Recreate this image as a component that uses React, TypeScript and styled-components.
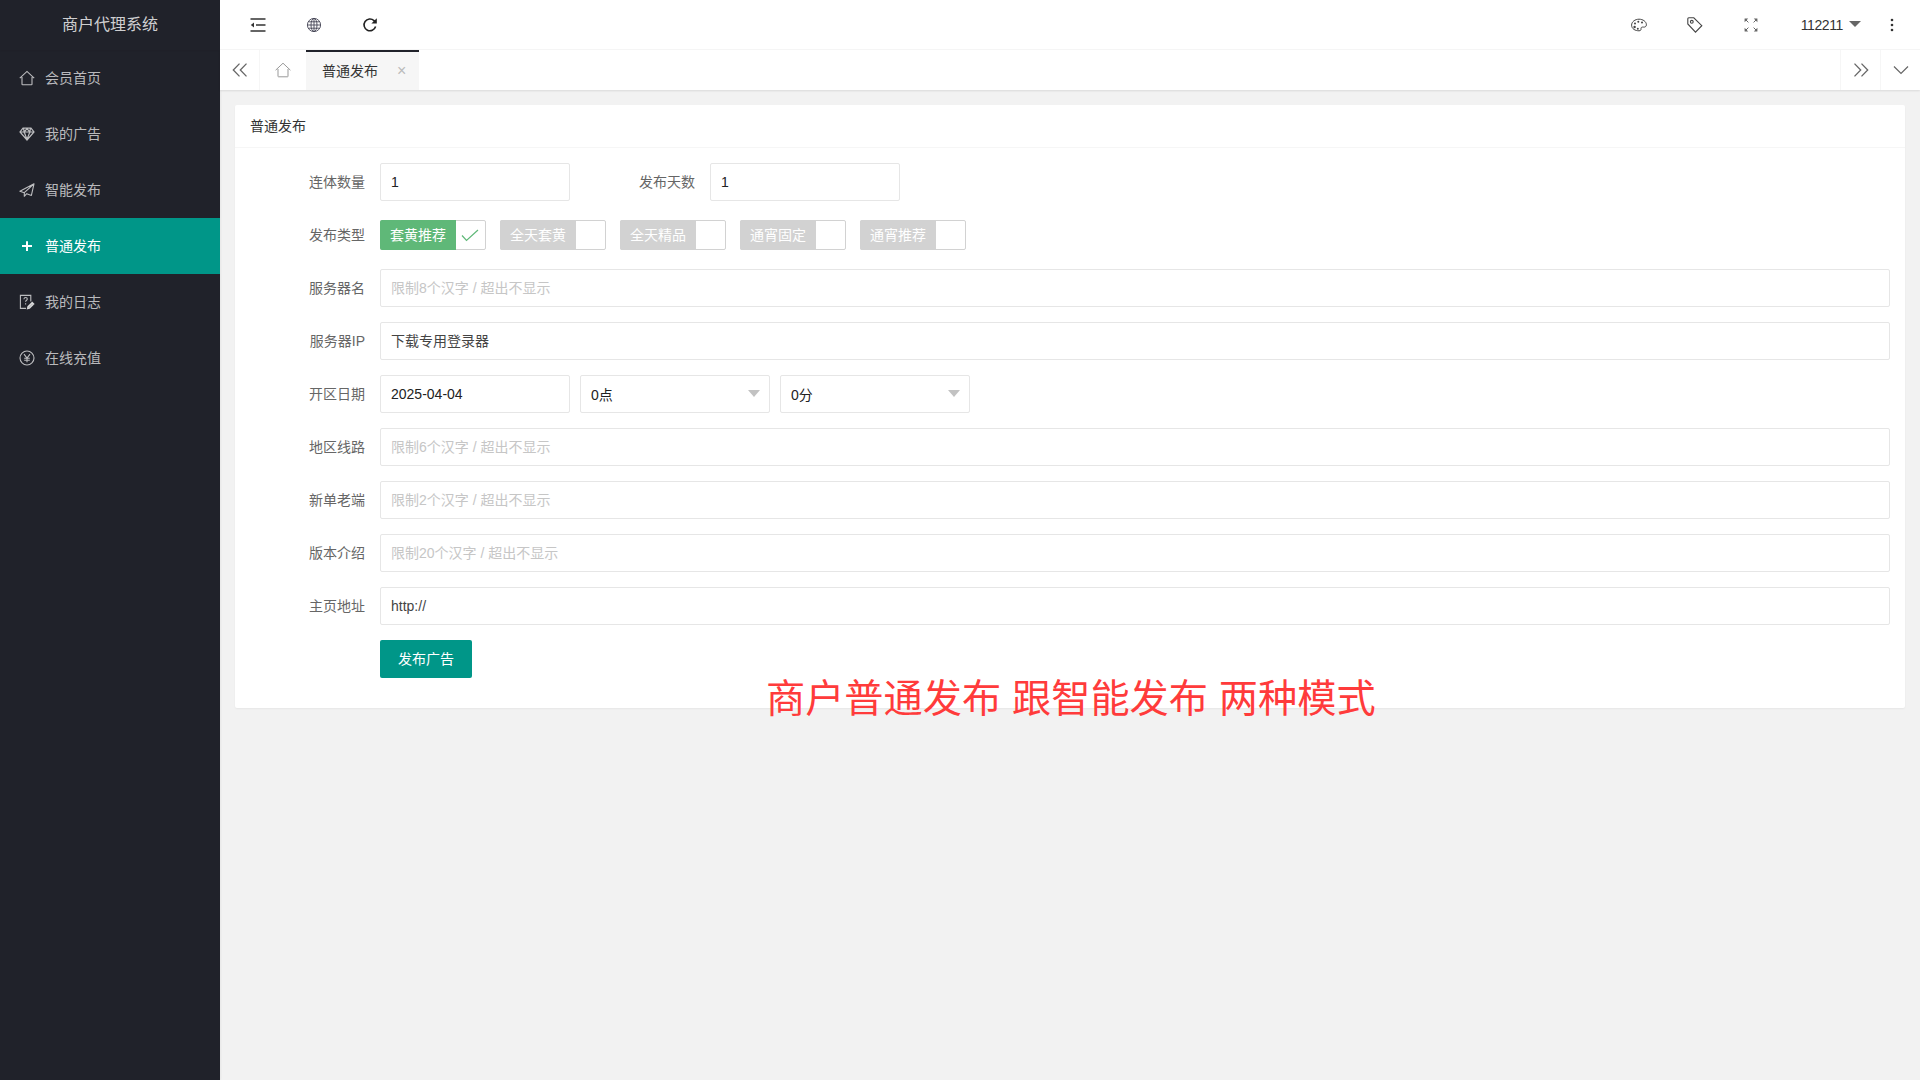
// App.tsx
import React from 'react';
import styled, { createGlobalStyle } from 'styled-components';

const FONT = '"Liberation Sans", "Noto Sans CJK SC", sans-serif';

const menuItems = [
  { label: '会员首页', icon: 'home' },
  { label: '我的广告', icon: 'diamond' },
  { label: '智能发布', icon: 'plane' },
  { label: '普通发布', icon: 'plus', active: true },
  { label: '我的日志', icon: 'log' },
  { label: '在线充值', icon: 'yen' },
];

const adTypes = [
  { label: '套黄推荐', checked: true },
  { label: '全天套黄' },
  { label: '全天精品' },
  { label: '通宵固定' },
  { label: '通宵推荐' },
];

function NavIcon({ name }: { name: string }) {
  if (name === 'home') {
    return (
      <svg width="16" height="16" viewBox="0 0 16 16" fill="none" stroke="currentColor" strokeWidth="1.1">
        <path d="M.8 8.2 8 1.4l7.2 6.8M3 7v7.2q0 .6.6.6h8.8q.6 0 .6-.6V7" />
      </svg>
    );
  }
  if (name === 'diamond') {
    return (
      <svg width="16" height="16" viewBox="0 0 16 16" fill="none" stroke="currentColor" strokeWidth="1.2">
        <path d="M4 2.2h8l3 3.8-7 8-7-8zM1.2 6h13.6M5.2 6 8 13.5 10.8 6M4.6 2.6 5.2 6 8 2.6 10.8 6l.6-3.4" />
      </svg>
    );
  }
  if (name === 'plane') {
    return (
      <svg width="16" height="16" viewBox="0 0 16 16" fill="none" stroke="currentColor" strokeWidth="1.1" strokeLinejoin="round">
        <path d="M15 1.8.9 9.2l4.4 1.5zM15 1.8l-9.7 8.9v3.6l2.4-2.6 4.7 1.7z" />
      </svg>
    );
  }
  if (name === 'plus') {
    return (
      <svg width="16" height="16" viewBox="0 0 16 16" fill="none" stroke="currentColor" strokeWidth="2">
        <path d="M8 3.2v9.8M3 8h10" />
      </svg>
    );
  }
  if (name === 'log') {
    return (
      <svg width="16" height="16" viewBox="0 0 16 16" fill="none" stroke="currentColor" strokeWidth="1.1">
        <path d="M7 14.4H1.4V1.4h10.4v6" />
        <path d="M4.9 5.2q.2-1.7 1.7-1.7 1.7 0 1.7 1.5 0 .9-1 1.5-.7.4-.7 1.3M6.6 9.2v1.2" />
        <path d="m8.4 14.8.5-2.2 4.3-4.3 1.7 1.7-4.3 4.3z" fill="currentColor" />
      </svg>
    );
  }
  return (
    <svg width="16" height="16" viewBox="0 0 16 16" fill="none" stroke="currentColor" strokeWidth="1.1">
      <circle cx="8" cy="8" r="7" />
      <path d="M5 4.2 8 8l3-3.8M8 8v4.2M5.2 8.2h5.6M5.2 10.2h5.6" />
    </svg>
  );
}

export default function App() {
  return (
    <Page>
      <GlobalStyle />
      <Sidebar>
        <Logo>商户代理系统</Logo>
        {menuItems.map((item) => (
          <MenuItem key={item.label} $active={item.active}>
            <NavIcon name={item.icon} />
            <MenuLabel>{item.label}</MenuLabel>
          </MenuItem>
        ))}
      </Sidebar>

      <Main>
        <Header>
          <HeaderGroup>
            <HeaderItem>
              <svg width="16" height="16" viewBox="0 0 16 16" fill="none" stroke="#333" strokeWidth="1.3">
                <path d="M.5 2h15M6 8h9.5M.5 14h15" />
                <path d="M4 5.6v4.8L.8 8z" fill="#333" stroke="none" />
              </svg>
            </HeaderItem>
            <HeaderItem>
              <svg width="16" height="16" viewBox="0 0 16 16" fill="none" stroke="#445" strokeWidth=".9">
                <circle cx="8" cy="8" r="6.6" />
                <ellipse cx="8" cy="8" rx="3" ry="6.6" />
                <path d="M8 1.4v13.2M1.4 8h13.2M2.4 4.8h11.2M2.4 11.2h11.2" />
              </svg>
            </HeaderItem>
            <HeaderItem>
              <svg width="16" height="16" viewBox="0 0 16 16" fill="none" stroke="#222" strokeWidth="1.6">
                <path d="M13.6 9.6A5.9 5.9 0 1 1 12 3.6l1.6 1.6" />
                <path d="M14.8 1.2v5.4H9.4z" fill="#222" stroke="none" />
              </svg>
            </HeaderItem>
          </HeaderGroup>
          <HeaderGroup>
            <HeaderItem>
              <svg width="16" height="16" viewBox="0 0 16 16" fill="none" stroke="#444" strokeWidth="1">
                <path d="M8 2.2c4 0 7.4 2.4 7.4 5.6 0 1.7-1.4 2.5-3 2.3-1.5-.2-2.6.3-2.4 1.6.2 1.2-.4 2.1-2 2.1-3.6 0-7.4-1.8-7.4-5.7C.6 4.8 4 2.2 8 2.2z" />
                <g fill="#444" stroke="none">
                  <circle cx="4" cy="6.6" r="1" />
                  <circle cx="7.3" cy="4.8" r="1" />
                  <circle cx="11" cy="5.6" r="1" />
                  <circle cx="3.6" cy="10" r="1.2" />
                  <circle cx="6.8" cy="11.8" r="1" />
                </g>
              </svg>
            </HeaderItem>
            <HeaderItem>
              <svg width="16" height="16" viewBox="0 0 16 16" fill="none" stroke="#444" strokeWidth="1.1">
                <path d="M.8 1.8q0-1 1-1h5l8 7.9-6.3 6.500L.8 7z" />
                <circle cx="4.8" cy="4.8" r="1.4" />
              </svg>
            </HeaderItem>
            <HeaderItem>
              <svg width="14" height="14" viewBox="0 0 14 14" fill="none" stroke="#666" strokeWidth="1">
                <path d="m1 1 3.4 3.4M13 1 9.6 4.4M1 13l3.4-3.4M13 13 9.6 9.6" />
                <path d="M.6 4.2V.6h3.6zM13.4 4.2V.6H9.8zM.6 9.8v3.600h3.600zM13.400 9.800v3.600H9.800z" fill="#666" stroke="none" />
              </svg>
            </HeaderItem>
            <UserName>
              <UserText>112211</UserText>
              <Caret />
            </UserName>
            <HeaderItem>
              <svg width="4" height="14" viewBox="0 0 4 14" fill="#333">
                <circle cx="2" cy="2" r="1.3" />
                <circle cx="2" cy="7" r="1.3" />
                <circle cx="2" cy="12" r="1.3" />
              </svg>
            </HeaderItem>
          </HeaderGroup>
        </Header>

        <TabBar>
          <TabButton>
            <svg width="16" height="14" viewBox="0 0 16 14" fill="none" stroke="#666" strokeWidth="1.3">
              <path d="M7.5.6 1.3 7l6.2 6.4M14.5.6 8.3 7l6.2 6.4" />
            </svg>
          </TabButton>
          <HomeTab>
            <svg width="16" height="16" viewBox="0 0 16 16" fill="none" stroke="#999" strokeWidth="1">
              <path d="M.6 8.2 8 1.2l7.4 7M3 7v7.3q0 .5.5.5h9q.5 0 .5-.5V7" />
            </svg>
          </HomeTab>
          <ActiveTab>
            <TabTitle>普通发布</TabTitle>
            <TabClose>×</TabClose>
          </ActiveTab>
          <TabSpacer />
          <TabEndButton>
            <svg width="16" height="14" viewBox="0 0 16 14" fill="none" stroke="#666" strokeWidth="1.3">
              <path d="M8.5.6 14.7 7l-6.2 6.4M1.5.6 7.7 7l-6.2 6.4" />
            </svg>
          </TabEndButton>
          <TabEndButton>
            <svg width="16" height="10" viewBox="0 0 16 10" fill="none" stroke="#666" strokeWidth="1.2">
              <path d="m1 1.5 7 7 7-7" />
            </svg>
          </TabEndButton>
        </TabBar>

        <Content>
          <Card>
            <CardHeader>普通发布</CardHeader>
            <CardBody>
              <Row>
                <Label>连体数量</Label>
                <ShortInput readOnly defaultValue="1" />
                <Label>发布天数</Label>
                <ShortInput readOnly defaultValue="1" />
              </Row>
              <Row>
                <Label>发布类型</Label>
                <ToggleGroup>
                  {adTypes.map((type) => (
                    <Toggle key={type.label}>
                      <ToggleText $checked={type.checked}>{type.label}</ToggleText>
                      {type.checked && (
                        <svg width="20" height="16" viewBox="0 0 20 16" fill="none" stroke="#5fb878" strokeWidth="1.2">
                          <path d="m2 8.5 4.500 5L18 3" />
                        </svg>
                      )}
                    </Toggle>
                  ))}
                </ToggleGroup>
              </Row>
              <Row>
                <Label>服务器名</Label>
                <WideInput readOnly placeholder="限制8个汉字 / 超出不显示" />
              </Row>
              <Row>
                <Label>服务器IP</Label>
                <WideInput $raised readOnly defaultValue="下载专用登录器" />
              </Row>
              <Row>
                <Label>开区日期</Label>
                <ShortInput readOnly defaultValue="2025-04-04" />
                <SelectBox>
                  <ShortInput readOnly defaultValue="0点" />
                  <SelectArrow />
                </SelectBox>
                <SelectBox>
                  <ShortInput readOnly defaultValue="0分" />
                  <SelectArrow />
                </SelectBox>
              </Row>
              <Row>
                <Label>地区线路</Label>
                <WideInput readOnly placeholder="限制6个汉字 / 超出不显示" />
              </Row>
              <Row>
                <Label>新单老端</Label>
                <WideInput readOnly placeholder="限制2个汉字 / 超出不显示" />
              </Row>
              <Row>
                <Label>版本介绍</Label>
                <WideInput readOnly placeholder="限制20个汉字 / 超出不显示" />
              </Row>
              <Row>
                <Label>主页地址</Label>
                <WideInput readOnly defaultValue="http://" />
              </Row>
              <Row>
                <Label />
                <SubmitButton>发布广告</SubmitButton>
              </Row>
            </CardBody>
          </Card>
        </Content>
      </Main>
      <Annotation>商户普通发布 跟智能发布 两种模式</Annotation>
    </Page>
  );
}

// Styled Components
const GlobalStyle = createGlobalStyle`
  html, body {
    margin: 0;
    padding: 0;
    background: #f2f2f2;
  }

  * {
    box-sizing: border-box;
  }
`;

const Page = styled.div`
  position: relative;
  display: flex;
  width: 1920px;
  height: 1080px;
  overflow: hidden;
  font-family: ${FONT};
  font-size: 14px;
  color: #333;
`;

const Sidebar = styled.aside`
  flex: 0 0 220px;
  background: #20222a;
  box-shadow: 1px 0 2px rgba(0, 0, 0, 0.05);
`;

const Logo = styled.div`
  height: 50px;
  line-height: 50px;
  text-align: center;
  font-size: 16px;
  color: rgba(255, 255, 255, 0.8);
  box-shadow: 0 1px 2px rgba(0, 0, 0, 0.05);
`;

const MenuItem = styled.div<{ $active?: boolean }>`
  display: flex;
  align-items: center;
  gap: 10px;
  height: 56px;
  padding-left: 19px;
  color: ${(p) => (p.$active ? '#fff' : 'rgba(255, 255, 255, 0.7)')};
  background: ${(p) => (p.$active ? '#009688' : 'transparent')};
`;

const MenuLabel = styled.span`
  padding-bottom: 2px;
`;

const Main = styled.main`
  flex: 1;
  display: flex;
  flex-direction: column;
  min-width: 0;
`;

const Header = styled.header`
  display: flex;
  justify-content: space-between;
  height: 50px;
  padding: 1px 0 0 10px;
  background: #fff;
  border-bottom: 1px solid #f6f6f6;
`;

const HeaderGroup = styled.div`
  display: flex;
  align-items: center;
`;

const HeaderItem = styled.div`
  display: flex;
  align-items: center;
  justify-content: center;
  width: 56px;
  height: 100%;
`;

const UserName = styled.div`
  display: flex;
  align-items: center;
  gap: 6px;
  height: 100%;
  padding: 0 3px 0 22px;
  color: #333;
`;

const UserText = styled.span`
  letter-spacing: -0.4px;
`;

const Caret = styled.span`
  width: 0;
  height: 0;
  margin-top: -3px;
  border-style: solid;
  border-width: 6px 6px 0;
  border-color: #666 transparent transparent;
`;

const TabBar = styled.div`
  display: flex;
  height: 40px;
  background: #fff;
  box-shadow: 0 1px 2px rgba(0, 0, 0, 0.1);
`;

const TabButton = styled.div`
  display: flex;
  align-items: center;
  justify-content: center;
  width: 40px;
  border-right: 1px solid #f6f6f6;
`;

const HomeTab = styled.div`
  display: flex;
  align-items: center;
  justify-content: center;
  width: 46px;
`;

const ActiveTab = styled.div`
  display: flex;
  align-items: center;
  width: 113px;
  padding: 0 0 0 16px;
  background: #f6f6f6;
  border-top: 2px solid #20222a;
  color: #333;
`;

const TabTitle = styled.span`
  padding-bottom: 2px;
`;

const TabClose = styled.span`
  margin-left: 19px;
  font-size: 16px;
  line-height: 1;
  color: #bbb;
`;

const TabSpacer = styled.div`
  flex: 1;
`;

const TabEndButton = styled.div`
  display: flex;
  align-items: center;
  justify-content: center;
  width: 40px;
  border-left: 1px solid #f6f6f6;
`;

const Content = styled.div`
  padding: 15px;
`;

const Card = styled.section`
  background: #fff;
  border-radius: 2px;
  box-shadow: 0 1px 2px rgba(0, 0, 0, 0.05);
`;

const CardHeader = styled.div`
  height: 43px;
  line-height: 42px;
  padding: 0 15px;
  border-bottom: 1px solid #f6f6f6;
  color: #333;
`;

const CardBody = styled.form`
  display: flex;
  flex-direction: column;
  gap: 15px;
  padding: 15px 15px 30px;
`;

const Row = styled.div`
  display: flex;
  align-items: center;
  gap: 10px;
  height: 38px;
`;

const Label = styled.label`
  flex: 0 0 115px;
  margin-right: 5px;
  padding-bottom: 2px;
  text-align: right;
  color: #666;
`;

const TextInput = styled.input`
  height: 38px;
  padding: 0 10px;
  font-family: ${FONT};
  font-size: 14px;
  color: #222;
  background: #fff;
  border: 1px solid #e6e6e6;
  border-radius: 2px;
  outline: none;

  &::placeholder {
    color: #c6c6c6;
  }
`;

const ShortInput = styled(TextInput)`
  width: 190px;
`;

const WideInput = styled(TextInput)<{ $raised?: boolean }>`
  flex: 1;
  min-width: 0;
  padding-bottom: ${(p) => (p.$raised ? '2px' : '0')};
  color: #444;
`;

const SelectBox = styled.div`
  position: relative;
  width: 190px;
`;

const SelectArrow = styled.span`
  position: absolute;
  top: 15px;
  right: 10px;
  width: 0;
  height: 0;
  border-style: solid;
  border-width: 7px 6px 0;
  border-color: #c2c2c2 transparent transparent;
`;

const ToggleGroup = styled.div`
  display: flex;
  gap: 14px;
`;

const Toggle = styled.div`
  display: flex;
  align-items: center;
  width: 106px;
  height: 30px;
  background: #fff;
  border: 1px solid #d2d2d2;
  border-radius: 2px;

  svg {
    margin-left: 4px;
  }
`;

const ToggleText = styled.span<{ $checked?: boolean }>`
  width: 76px;
  height: 30px;
  margin: -1px 0 -1px -1px;
  padding: 0 10px;
  line-height: 30px;
  color: #fff;
  background: ${(p) => (p.$checked ? '#5fb878' : '#d2d2d2')};
  border-radius: 2px 0 0 2px;
`;

const SubmitButton = styled.button`
  width: 92px;
  height: 38px;
  padding: 0 0 2px;
  font-family: ${FONT};
  font-size: 14px;
  color: #fff;
  background: #009688;
  border: none;
  border-radius: 2px;
`;

const Annotation = styled.div`
  position: absolute;
  left: 766px;
  top: 676px;
  font-size: 39.2px;
  line-height: 46px;
  white-space: nowrap;
  color: #ff3b3b;
`;
